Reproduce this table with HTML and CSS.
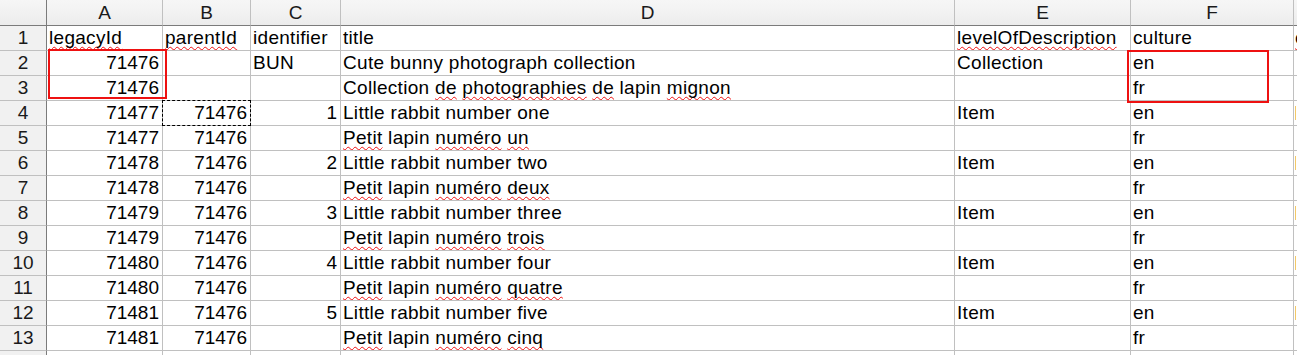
FILE: index.html
```html
<!DOCTYPE html>
<html lang="en">
<head>
    <meta charset="UTF-8">
    <title>descriptions.csv</title>
    <link rel="stylesheet" href="styles.css">
</head>
<body>
    <div class="sheet">
        <div class="grid">
            <!-- column headers -->
            <div class="corner"></div>
            <div class="colhead">A</div>
            <div class="colhead">B</div>
            <div class="colhead">C</div>
            <div class="colhead">D</div>
            <div class="colhead">E</div>
            <div class="colhead">F</div>
            <div class="colhead last"></div>

            <div class="rowhead">1</div>
            <div class="cell"><span class="typo">legacyId</span></div>
            <div class="cell"><span class="typo">parentId</span></div>
            <div class="cell">identifier</div>
            <div class="cell">title</div>
            <div class="cell"><span class="typo">levelOfDescription</span></div>
            <div class="cell">culture</div>
            <div class="cell edge"><span class="typo">c</span></div>

            <div class="rowhead">2</div>
            <div class="cell num">71476</div>
            <div class="cell"></div>
            <div class="cell">BUN</div>
            <div class="cell">Cute bunny photograph collection</div>
            <div class="cell">Collection</div>
            <div class="cell">en</div>
            <div class="cell edge"></div>

            <div class="rowhead">3</div>
            <div class="cell num">71476</div>
            <div class="cell"></div>
            <div class="cell"></div>
            <div class="cell">Collection <span class="typo">de</span> <span class="typo">photographies</span> <span class="typo">de</span> lapin <span class="typo">mignon</span></div>
            <div class="cell"></div>
            <div class="cell">fr</div>
            <div class="cell edge"></div>

            <div class="rowhead">4</div>
            <div class="cell num">71477</div>
            <div class="cell num">71476</div>
            <div class="cell num">1</div>
            <div class="cell">Little rabbit number one</div>
            <div class="cell">Item</div>
            <div class="cell">en</div>
            <div class="cell edge"><span class="tick"></span></div>

            <div class="rowhead">5</div>
            <div class="cell num">71477</div>
            <div class="cell num">71476</div>
            <div class="cell"></div>
            <div class="cell"><span class="typo">Petit</span> lapin <span class="typo">numéro</span> <span class="typo">un</span></div>
            <div class="cell"></div>
            <div class="cell">fr</div>
            <div class="cell edge"></div>

            <div class="rowhead">6</div>
            <div class="cell num">71478</div>
            <div class="cell num">71476</div>
            <div class="cell num">2</div>
            <div class="cell">Little rabbit number two</div>
            <div class="cell">Item</div>
            <div class="cell">en</div>
            <div class="cell edge"><span class="tick"></span></div>

            <div class="rowhead">7</div>
            <div class="cell num">71478</div>
            <div class="cell num">71476</div>
            <div class="cell"></div>
            <div class="cell"><span class="typo">Petit</span> lapin <span class="typo">numéro</span> <span class="typo">deux</span></div>
            <div class="cell"></div>
            <div class="cell">fr</div>
            <div class="cell edge"></div>

            <div class="rowhead">8</div>
            <div class="cell num">71479</div>
            <div class="cell num">71476</div>
            <div class="cell num">3</div>
            <div class="cell">Little rabbit number three</div>
            <div class="cell">Item</div>
            <div class="cell">en</div>
            <div class="cell edge"><span class="tick"></span></div>

            <div class="rowhead">9</div>
            <div class="cell num">71479</div>
            <div class="cell num">71476</div>
            <div class="cell"></div>
            <div class="cell"><span class="typo">Petit</span> lapin <span class="typo">numéro</span> <span class="typo">trois</span></div>
            <div class="cell"></div>
            <div class="cell">fr</div>
            <div class="cell edge"></div>

            <div class="rowhead">10</div>
            <div class="cell num">71480</div>
            <div class="cell num">71476</div>
            <div class="cell num">4</div>
            <div class="cell">Little rabbit number four</div>
            <div class="cell">Item</div>
            <div class="cell">en</div>
            <div class="cell edge"><span class="tick"></span></div>

            <div class="rowhead">11</div>
            <div class="cell num">71480</div>
            <div class="cell num">71476</div>
            <div class="cell"></div>
            <div class="cell"><span class="typo">Petit</span> lapin <span class="typo">numéro</span> <span class="typo">quatre</span></div>
            <div class="cell"></div>
            <div class="cell">fr</div>
            <div class="cell edge"></div>

            <div class="rowhead">12</div>
            <div class="cell num">71481</div>
            <div class="cell num">71476</div>
            <div class="cell num">5</div>
            <div class="cell">Little rabbit number five</div>
            <div class="cell">Item</div>
            <div class="cell">en</div>
            <div class="cell edge"><span class="tick"></span></div>

            <div class="rowhead">13</div>
            <div class="cell num">71481</div>
            <div class="cell num">71476</div>
            <div class="cell"></div>
            <div class="cell"><span class="typo">Petit</span> lapin <span class="typo">numéro</span> <span class="typo">cinq</span></div>
            <div class="cell"></div>
            <div class="cell">fr</div>
            <div class="cell edge"></div>

            <div class="rowhead"></div>
            <div class="cell"></div>
            <div class="cell"></div>
            <div class="cell"></div>
            <div class="cell"></div>
            <div class="cell"></div>
            <div class="cell"></div>
            <div class="cell edge"></div>
        </div>

        <!-- highlight boxes and copy marquee drawn over the grid -->
        <div class="mark mark-ids"></div>
        <div class="mark mark-culture"></div>
        <div class="marquee"></div>
    </div>
</body>
</html>
```

FILE: styles.css
```css
body {
    margin: 0;
    background: #ffffff;
    font-family: "Liberation Sans", Arial, sans-serif;
    overflow: hidden;
}
.sheet {
    position: relative;
}
.grid {
    display: grid;
    grid-template-columns: 47px 116px 88px 90px 614px 176px 163px 1fr;
    grid-auto-rows: 25px;
    grid-template-rows: 26px;
    font-size: 19px;
    line-height: 24px;
    color: #000;
}
.grid > div {
    box-sizing: border-box;
    border-right: 1px solid #c0c0c0;
    border-bottom: 1px solid #c0c0c0;
    white-space: nowrap;
    overflow: hidden;
}
.corner {
    background: linear-gradient(#f6f6f6, #ececec);
    border-right-color: #7b7b7b !important;
    border-bottom-color: #7b7b7b !important;
}
.colhead {
    background: linear-gradient(#f6f6f6 0%, #f3f3f3 40%, #ececec 100%);
    border-bottom-color: #7b7b7b !important;
    text-align: center;
    line-height: 25px;
    color: #1a1a1a;
}
.rowhead {
    background: #f1f1f1;
    border-right-color: #7b7b7b !important;
    text-align: center;
    color: #1a1a1a;
}
.cell {
    padding: 0 2px;
    letter-spacing: 0.3px;
}
.num {
    text-align: right;
    padding-right: 3px;
    letter-spacing: 0;
}
.edge {
    padding-left: 1px;
}
/* spell-check squiggle */
.typo {
    text-decoration: underline wavy #f01010;
    text-decoration-thickness: 1.2px;
    text-underline-offset: 2px;
    text-decoration-skip-ink: none;
}
.tick {
    display: inline-block;
    width: 2px;
    height: 14px;
    margin-top: 5px;
    border-left: 1px solid #f3c968;
    vertical-align: top;
}
.mark {
    position: absolute;
    border: 2px solid #ee1111;
}
.mark-ids {
    left: 48px;
    top: 49px;
    width: 115px;
    height: 46px;
}
.mark-culture {
    left: 1127px;
    top: 50px;
    width: 138px;
    height: 49px;
}
.marquee {
    position: absolute;
    left: 162px;
    top: 100px;
    width: 87px;
    height: 24px;
    border: 1px dashed #000;
}
```
